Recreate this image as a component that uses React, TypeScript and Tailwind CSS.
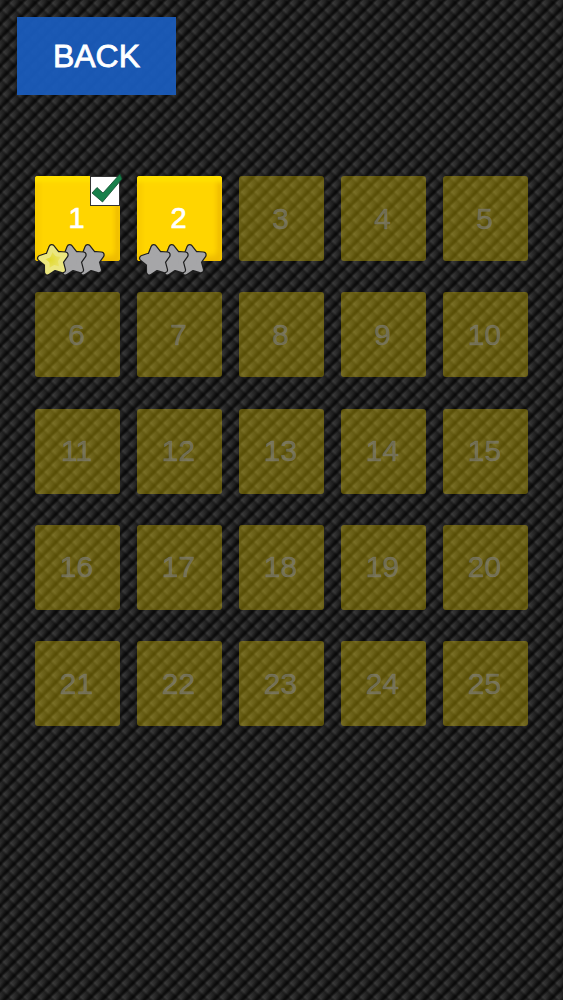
const STAR = "M14.8 3.6 L19.9 10.2 L28.2 10.9 L23.4 17.7 L25.6 25.9 L17.5 23.4 L10.4 28 L10.3 19.6 L3.6 14.2 L11.7 11.5 Z";
const FONT = "font-['Liberation_Sans',Arial,sans-serif]";

function Star({ gold, layer }: { gold?: boolean; layer: string }) {
  const fill = gold ? "url(#goldStar)" : "#a6a6a8";
  return (
    <svg viewBox="0 0 33 33" className={`relative w-[33px] h-[33px] -mr-[15px] shrink-0 overflow-visible ${layer}`}>
      <defs>
        <radialGradient id="goldStar" cx="0.4" cy="0.5" r="0.6">
          <stop offset="0" stopColor="#e2da30" />
          <stop offset="0.65" stopColor="#e9e264" />
          <stop offset="1" stopColor="#f2eeb0" />
        </radialGradient>
      </defs>
      <path d={STAR} fill="#1e1e1e" stroke="#1e1e1e" strokeWidth="7" strokeLinejoin="round" />
      <path d={STAR} fill={fill} stroke={gold ? "#ece77e" : "#a6a6a8"} strokeWidth="4.6" strokeLinejoin="round" />
    </svg>
  );
}

function Stars({ earned }: { earned: number }) {
  return (
    <div className="absolute left-[2px] top-[68px] flex w-[84px]">
      <Star gold={earned > 0} layer="z-[3]" />
      <Star gold={earned > 1} layer="z-[2]" />
      <Star gold={earned > 2} layer="z-[1]" />
    </div>
  );
}

function Check() {
  return (
    <div className="absolute left-[55px] top-0 w-[30px] h-[30px] bg-white border border-[#333333]">
      <svg viewBox="0 0 30 30" className="absolute left-[-1px] top-[-1px] w-[30px] h-[30px] overflow-visible">
        <path
          d="M2 17 L7 11.5 L13 17 L30 -2 L32 3 L12.5 26 Z"
          fill="#17804a"
          stroke="#0f4a2c"
          strokeWidth="0.8"
          strokeLinejoin="round"
        />
      </svg>
    </div>
  );
}

function Open({ n, done, earned }: { n: number; done?: boolean; earned: number }) {
  return (
    <div className="relative w-[85px] h-[85px]">
      <div className="w-full h-full rounded-[3px] bg-[#ffd500] shadow-[inset_0_7px_4px_-1px_#ffe000,inset_-7px_-7px_5px_-2px_#efbc00,inset_7px_0_4px_-2px_#f8cb00]" />
      <div
        className={`absolute inset-0 pr-[2px] flex items-center justify-center text-white text-[29px] leading-none [-webkit-text-stroke:0.7px_white] ${FONT}`}
      >
        {n}
      </div>
      {done && <Check />}
      <Stars earned={earned} />
    </div>
  );
}

function Locked({ n }: { n: number }) {
  return (
    <div
      className={`w-[85px] h-[85px] rounded-[3px] bg-[#ffe000]/32 pr-[2px] flex items-center justify-center text-[#808080]/60 text-[30px] leading-none [-webkit-text-stroke:0.5px_#80808099] ${FONT}`}
    >
      {n}
    </div>
  );
}

export default function App() {
  const nums = Array.from({ length: 25 }, (_, i) => i + 1);
  return (
    <div
      className="w-[563px] h-[1000px] overflow-hidden bg-[#2c2c2c] pt-[17px] [background-image:repeating-linear-gradient(135deg,#00000000_0,#00000020_3px,#000000b8_6.6px,#000000b8_7.6px,#00000000_9.899px),repeating-linear-gradient(45deg,#ffffff12_0,#00000000_4px,#00000048_7.5px,#ffffff12_9.899px)]"
    >
      <div
        className={`ml-[17px] w-[159px] h-[78px] bg-[#1a5cbc]/95 flex items-center justify-center text-white text-[32px] leading-none [-webkit-text-stroke:0.8px_white] ${FONT}`}
      >
        BACK
      </div>
      <div className="ml-[35px] mt-[81px] grid grid-cols-[repeat(5,85px)] gap-x-[17px] gap-y-[31.25px]">
        {nums.map((n) =>
          n === 1 ? (
            <Open key={n} n={n} done earned={1} />
          ) : n === 2 ? (
            <Open key={n} n={n} earned={0} />
          ) : (
            <Locked key={n} n={n} />
          )
        )}
      </div>
    </div>
  );
}
